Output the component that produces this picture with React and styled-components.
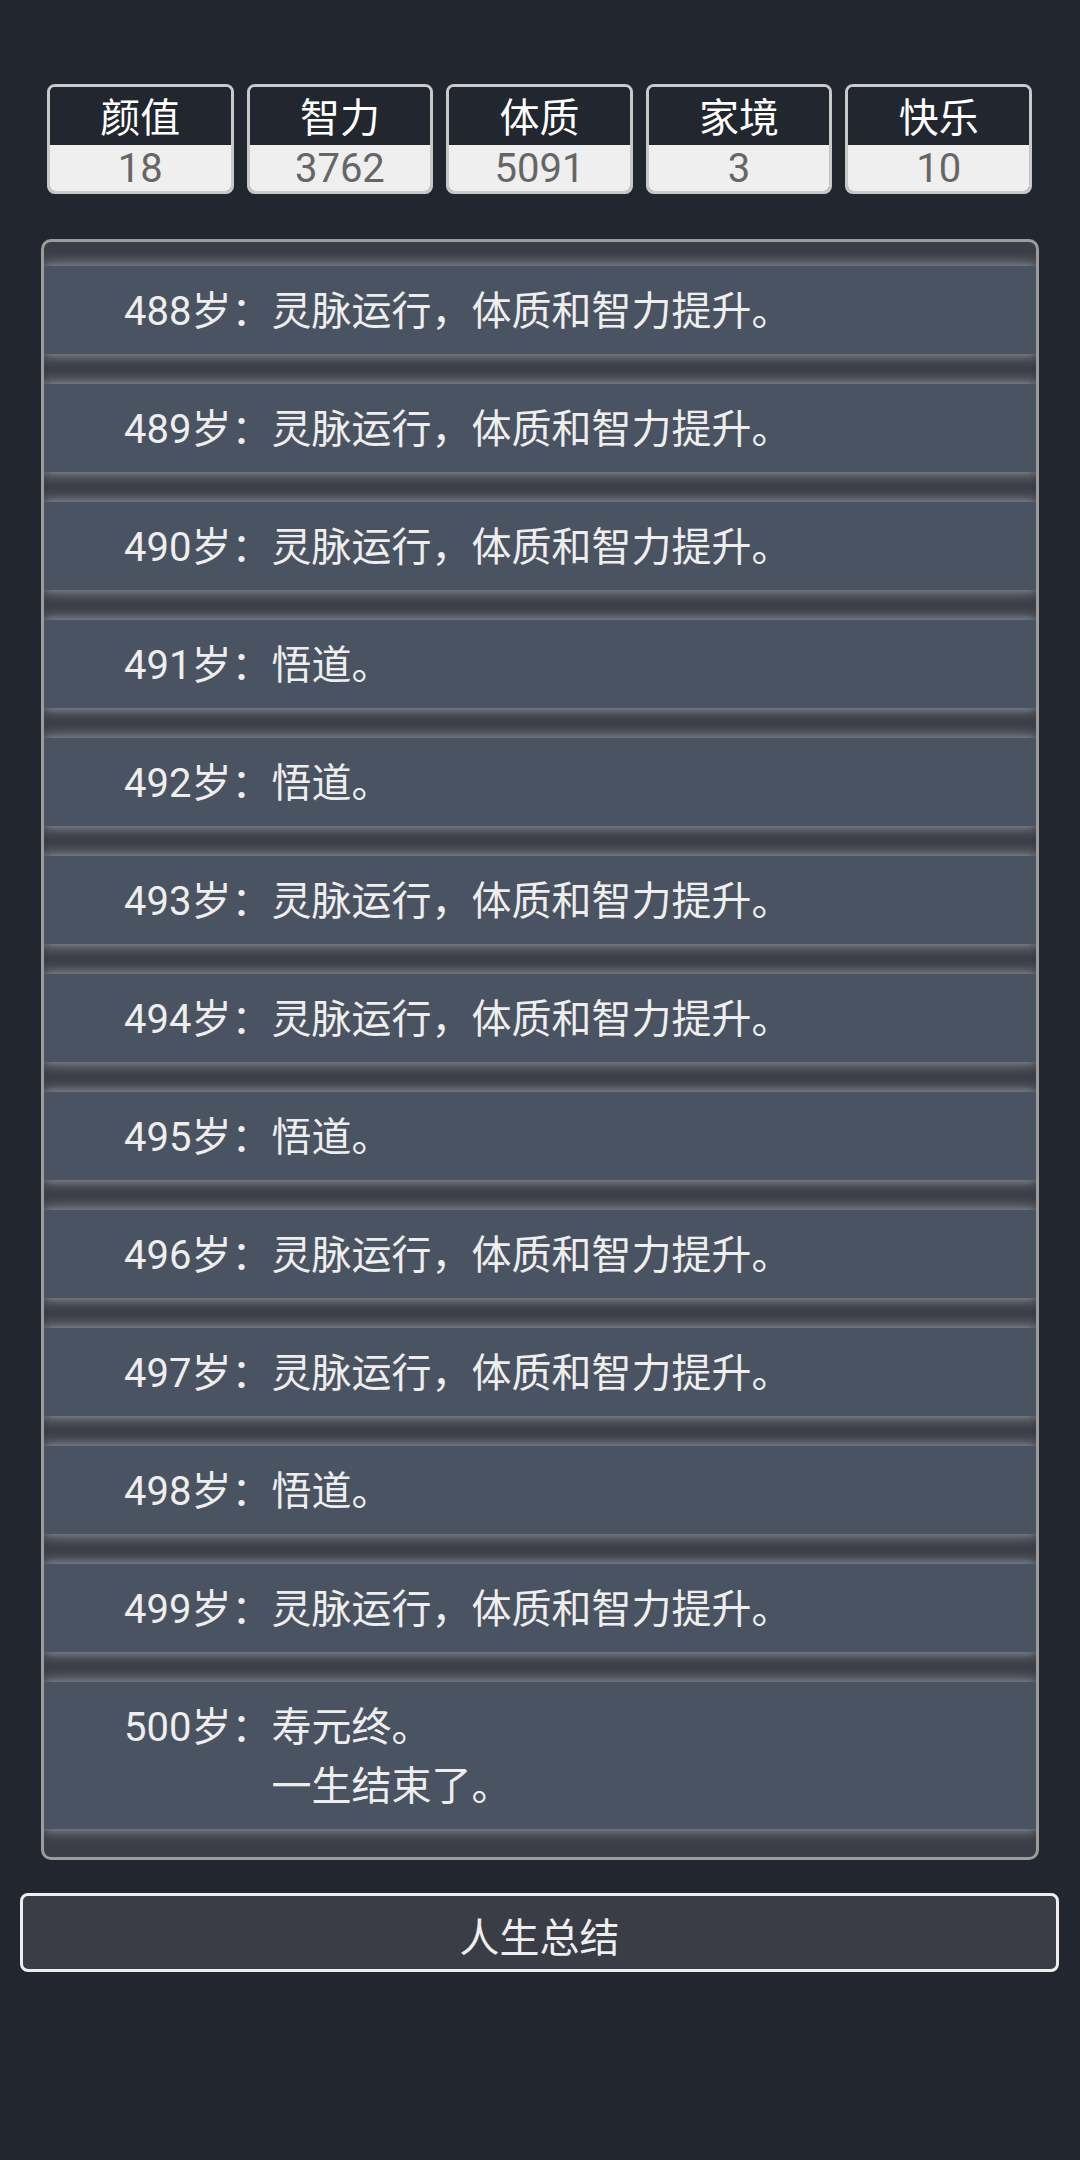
import React from "react";
import styled, { createGlobalStyle } from "styled-components";

const GlobalStyle = createGlobalStyle`
    html, body {
        margin: 0;
        padding: 0;
        background: #21262f;
    }
    body {
        font-family: Roboto, "Noto Sans CJK SC", sans-serif;
        color: #eeeeee;
    }
`;

const Page = styled.div`
    min-height: 2160px;
    box-sizing: border-box;
    padding-top: 84px;
    background: #21262f;
`;

const StatsRow = styled.ul`
    display: grid;
    grid-template-columns: repeat(5, 1fr);
    gap: 13px;
    list-style: none;
    margin: 0 48px 0 47px;
    padding: 0;
`;

const StatBox = styled.li`
    border: 3px solid #c9c9c9;
    border-radius: 8px;
    overflow: hidden;
    text-align: center;
    font-size: 40px;
`;

const StatLabel = styled.div`
    height: 58px;
    line-height: 64px;
    background: #21262f;
    color: #ffffff;
    overflow: hidden;
`;

const StatValue = styled.div`
    height: 46px;
    line-height: 48px;
    background: #efefef;
    color: #666666;
    overflow: hidden;
`;

const Trajectory = styled.ul`
    display: flex;
    flex-direction: column;
    gap: 30px;
    list-style: none;
    margin: 45px 41px 0;
    padding: 24px 0 28px;
    border: 3px solid #9c9c9c;
    border-radius: 10px;
    overflow: hidden;
    background: #3b3e46;
`;

const Event = styled.li`
    display: flex;
    padding: 16px 80px 13px;
    background: #4a5361;
    box-shadow: 0 0 12px 1px rgba(172, 177, 185, 0.85);
    font-size: 40px;
    line-height: 59px;
    color: #eeeeee;
`;

const Age = styled.span`
    flex: none;
`;

const Content = styled.span`
    white-space: pre-line;
`;

const SummaryButton = styled.button`
    display: block;
    box-sizing: border-box;
    width: calc(100% - 41px);
    height: 79px;
    margin: 33px 21px 0 20px;
    padding: 4px 0 0;
    border: 3px solid #eeeeee;
    border-radius: 8px;
    background: #3a3d45;
    color: #eeeeee;
    font-family: Roboto, "Noto Sans CJK SC", sans-serif;
    font-size: 40px;
`;

const stats = [
    { label: "颜值", value: 18 },
    { label: "智力", value: 3762 },
    { label: "体质", value: 5091 },
    { label: "家境", value: 3 },
    { label: "快乐", value: 10 },
];

const boost = "灵脉运行，体质和智力提升。";
const insight = "悟道。";

const events = [
    { age: 488, text: boost },
    { age: 489, text: boost },
    { age: 490, text: boost },
    { age: 491, text: insight },
    { age: 492, text: insight },
    { age: 493, text: boost },
    { age: 494, text: boost },
    { age: 495, text: insight },
    { age: 496, text: boost },
    { age: 497, text: boost },
    { age: 498, text: insight },
    { age: 499, text: boost },
    { age: 500, text: "寿元终。\n一生结束了。" },
];

const App = () => {
    return (
        <Page>
            <GlobalStyle />
            <StatsRow>
                {stats.map((s) => (
                    <StatBox key={s.label}>
                        <StatLabel>{s.label}</StatLabel>
                        <StatValue>{s.value}</StatValue>
                    </StatBox>
                ))}
            </StatsRow>
            <Trajectory>
                {events.map((e) => (
                    <Event key={e.age}>
                        <Age>{e.age}岁：</Age>
                        <Content>{e.text}</Content>
                    </Event>
                ))}
            </Trajectory>
            <SummaryButton>人生总结</SummaryButton>
        </Page>
    );
};

export default App;
